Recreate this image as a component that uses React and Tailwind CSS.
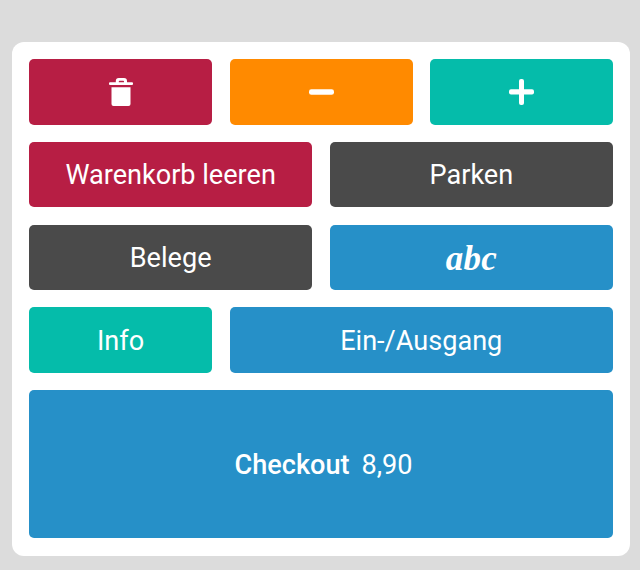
import React from 'react';
import clsx from 'clsx';

const colors = {
  red: 'bg-[#b71e44]',
  orange: 'bg-[#ff8a00]',
  green: 'bg-[#05bcaa]',
  dark: 'bg-[#4a4a4a]',
  blue: 'bg-[#2690c8]',
};

const TrashIcon = () => (
  <svg width="24" height="28" viewBox="0 0 24 28" fill="currentColor">
    <path
      fillRule="evenodd"
      d="M1 4.200h5.800V3a3 3 0 0 1 3-3h5.200a3 3 0 0 1 3 3v1.200h5a1 1 0 0 1 1 1V6a1 1 0 0 1-1 1H1a1 1 0 0 1-1-1v-.8a1 1 0 0 1 1-1ZM9.800 4.200h5.200V3.500a.7.7 0 0 0-.7-.7h-3.800a.7.7 0 0 0-.7.7Z"
    />
    <path d="M2.500 9.300h19V26a2 2 0 0 1-2 2h-15a2 2 0 0 1-2-2Z" />
  </svg>
);

const MinusIcon = () => (
  <svg className="ml-px" width="26" height="26" viewBox="0 0 26 26" fill="currentColor">
    <rect x="0" y="10.200" width="25" height="5.600" rx="2.400" />
  </svg>
);

const PlusIcon = () => (
  <svg width="26" height="26" viewBox="0 0 26 26" fill="currentColor">
    <rect x="0" y="10.200" width="25" height="5.400" rx="2" />
    <rect x="10" y="0" width="5" height="26" rx="2" />
  </svg>
);

const Key = ({ color, className, children, ...props }) => (
  <button
    className={clsx(
      'flex items-center justify-center rounded-[5px] text-white text-[27.1px] leading-none whitespace-nowrap',
      colors[color],
      className
    )}
    {...props}
  >
    {children}
  </button>
);

const App = () => {
  return (
    <div className="h-screen bg-[#dcdcdc] pt-[42px] pl-3 pr-2.5 font-['Roboto',sans-serif]">
      <div className="grid grid-cols-6 grid-rows-[65.5px_65.5px_65.5px_65.5px_148px] gap-x-[17.5px] gap-y-[17.25px] h-[514px] rounded-xl bg-white p-[17px]">
        <Key color="red" className="col-span-2" aria-label="Löschen">
          <TrashIcon />
        </Key>
        <Key color="orange" className="col-span-2" aria-label="Minus">
          <MinusIcon />
        </Key>
        <Key color="green" className="col-span-2" aria-label="Plus">
          <PlusIcon />
        </Key>

        <Key color="red" className="col-span-3 pt-0.5">Warenkorb leeren</Key>
        <Key color="dark" className="col-span-3 pt-0.5">Parken</Key>

        <Key color="dark" className="col-span-3 pt-0.5">Belege</Key>
        <Key color="blue" className="col-span-3 pt-0.5">
          <span className="font-['Liberation_Serif',serif] font-bold italic text-[35px] tracking-[0.3px]">abc</span>
        </Key>

        <Key color="green" className="col-span-2 pt-[3px]">Info</Key>
        <Key color="blue" className="col-span-4 pt-[3px]">Ein-/Ausgang</Key>

        <Key color="blue" className="col-span-6 pt-[3px] pl-[5px]">
          <span className="font-medium mr-3">Checkout</span>
          <span>8,90</span>
        </Key>
      </div>
    </div>
  );
};

export default App;
